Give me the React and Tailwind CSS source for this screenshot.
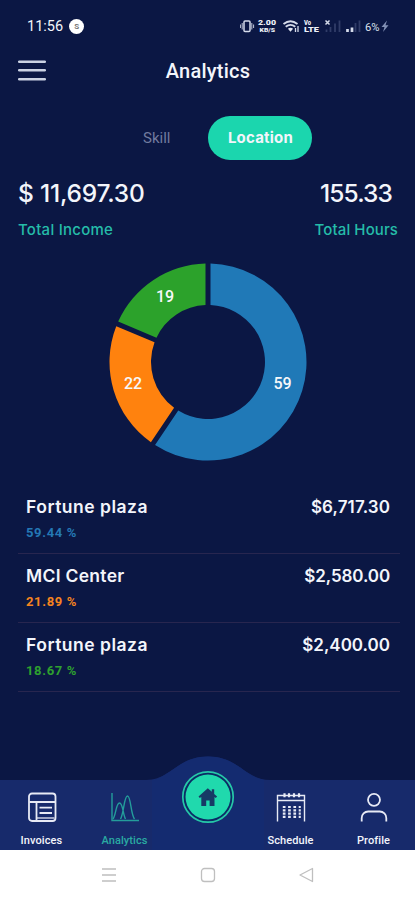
const ROWS = [
  { name: "Fortune plaza", pct: "59.44 %", color: "text-[#2478b5]", amount: "$6,717.30", nameTrack: "tracking-[0.5px]", amtTrack: "tracking-[0.1px]" },
  { name: "MCI Center", pct: "21.89 %", color: "text-[#f5841f]", amount: "$2,580.00", nameTrack: "tracking-[0.3px]", amtTrack: "tracking-[-0.1px]" },
  { name: "Fortune plaza", pct: "18.67 %", color: "text-[#2ea02f]", amount: "$2,400.00", nameTrack: "tracking-[0.5px]", amtTrack: "tracking-[0px]" },
];

const SLICES = [
  { from: 0, to: 213.98, color: "#2079b7", label: "59", x: 192.5, y: 133 },
  { from: 213.98, to: 292.79, color: "#ff820e", label: "22", x: 43, y: 133 },
  { from: 292.79, to: 360, color: "#2ca22b", label: "19", x: 75, y: 46 },
];

const CX = 118;
const CY = 112;

function ringSlice(from, to, outer, inner, gap) {
  const point = (r, deg) => {
    const a = (deg * Math.PI) / 180;
    return `${(CX + r * Math.sin(a)).toFixed(2)} ${(CY - r * Math.cos(a)).toFixed(2)}`;
  };
  const pad = (r) => (Math.asin(gap / 2 / r) * 180) / Math.PI;
  const po = pad(outer);
  const pi = pad(inner);
  const large = to - from > 180 ? 1 : 0;
  return `M${point(outer, from + po)}A${outer} ${outer} 0 ${large} 1 ${point(outer, to - po)}L${point(inner, to - pi)}A${inner} ${inner} 0 ${large} 0 ${point(inner, from + pi)}Z`;
}

function StatusIcons() {
  return (
    <svg width="150" height="16" viewBox="0 0 150 16" fill="none" stroke="#d5dbea" fontFamily="Roboto, sans-serif">
      <rect x="4" y="3" width="6" height="10.5" rx="1" strokeWidth="1.5" />
      <path d="M2.2 5v6.5M11.8 5v6.5M.4 6.5v3.5M13.6 6.5v3.5" strokeWidth="0.9" />
      <g fill="#eef1f8" stroke="none" fontWeight="900">
        <text x="18" y="6.8" fontSize="7" textLength="18" lengthAdjust="spacingAndGlyphs">2.00</text>
        <text x="19.5" y="14.3" fontSize="6" textLength="15.5" lengthAdjust="spacingAndGlyphs">KB/S</text>
        <text x="64" y="6.8" fontSize="6.5" textLength="7" lengthAdjust="spacingAndGlyphs">Vo</text>
        <text x="64" y="14.3" fontSize="6.5" textLength="15" lengthAdjust="spacingAndGlyphs">LTE</text>
      </g>
      <path d="M43.5 6Q50.5 .5 57.5 6M45.7 8.800Q50.5 5 55.3 8.800" strokeWidth="1.8" />
      <path d="M47.9 10.7L50.5 13.7l2.6-3Q50.5 9 47.9 10.7Z" fill="#e3e7f2" stroke="none" />
      <path d="M55.5 10v4M58 8v6" strokeWidth="1.3" />
      <path d="M85.5 2.5l4 4M89.5 2.5l-4 4" strokeWidth="1.5" />
      <path d="M86.5 11.5V14M90.5 9v5M95 5.5v8.5M99.5 2.5V14M115.5 5v9M119.5 2.5V14" stroke="#303c68" strokeWidth="1.8" />
      <path d="M107.5 11v3M112 9.5v4.5" strokeWidth="2.7" />
      <text x="125" y="12.5" fontSize="11" fill="#dce1ee" stroke="none" textLength="14.5" lengthAdjust="spacingAndGlyphs">6%</text>
      <path d="M147 2.5l-5.5 6.5h3l-1.5 5 5.5-6.8h-3Z" fill="#8290b5" stroke="none" />
    </svg>
  );
}

function InvoiceIcon() {
  return (
    <svg width="30" height="30" viewBox="0 0 30 30" fill="none" stroke="#e7eaf5" strokeWidth="1.8">
      <rect x="2" y="1.5" width="26.5" height="27.5" rx="3" />
      <path d="M2.5 10h26M9.500 10.5v18M12.5 15.7h12.5M12.5 21h12.5" />
      <path d="M9.500 26h18" strokeWidth="1.3" />
    </svg>
  );
}

function AnalyticsIcon() {
  return (
    <svg width="30" height="30" viewBox="0 0 30 30" fill="none" stroke="#249d9b" strokeWidth="1.4">
      <path d="M2 1v27.5H29" />
      <path d="M3 27C6 23 6 11 9.500 11s3.500 12 6 16M10.500 27C14 21 14 4 17.500 4s3 18 7 23" />
    </svg>
  );
}

function ScheduleIcon() {
  return (
    <svg width="30" height="30" viewBox="0 0 30 30" fill="none" stroke="#e7eaf5">
      <path d="M1.5 29.5V3.500h27v26M1.5 8.500h27" strokeWidth="1.4" />
      <path d="M8.500 1.200v4M13 1.200v4M18 1.200v4M23 1.200v4" strokeWidth="2.2" />
      <path d="M6.800 15h18M6.800 18.300h18M6.800 21.600h18M6.800 24.900h18" strokeWidth="2.2" strokeDasharray="2.7 2.6" />
    </svg>
  );
}

function ProfileIcon() {
  return (
    <svg width="30" height="30" viewBox="0 0 30 30" fill="none" stroke="#e7eaf5" strokeWidth="1.8">
      <circle cx="15" cy="7.8" r="6" />
      <path d="M2.700 29.500V26a6.500 6.500 0 0 1 6.500-6.500h11.600a6.500 6.500 0 0 1 6.500 6.500v3.500" />
    </svg>
  );
}

function NavItem({ icon, label, active }) {
  return (
    <div className="flex w-[83px] flex-col items-center">
      {icon}
      <span className={`mt-[12px] text-[11px] leading-[14px] font-medium tracking-[0.1px] ${active ? "text-[#2aaaa2]" : "text-[#f3f5fb]"}`}>{label}</span>
    </div>
  );
}

export default function App() {
  return (
    <div className="flex h-[900px] w-[415px] flex-col overflow-hidden bg-[#0b1744] font-['Roboto',sans-serif] text-[#f3f5fb]">
      <header className="flex h-[52px] shrink-0 items-start pt-[18px] pr-[25px] pl-[27px]">
        <span className="text-[14.5px] leading-[17px]">11:56</span>
        <span className="mt-px ml-[6px] flex size-[15px] items-center justify-center rounded-full bg-white text-[8px] font-bold text-[#777]">S</span>
        <span className="ml-auto"><StatusIcons /></span>
      </header>
      <div className="grid h-[38px] shrink-0 grid-cols-3 items-center px-[18px]">
        <svg width="28" height="24" viewBox="0 0 28 24" stroke="#cbd2e3" strokeWidth="2.5" strokeLinecap="round">
          <path d="M1.200 2.700h25.600M1.200 11.300h25.600M1.200 20.300h25.600" />
        </svg>
        <h1 className="pl-px text-center text-[20px] font-medium tracking-[0.25px]">Analytics</h1>
      </div>
      <div className="mt-[26px] flex h-[44px] shrink-0 items-center pl-[143px]">
        <span className="text-[15px] text-[#717b9f]">Skill</span>
        <span className="ml-[38px] flex h-[44px] w-[104px] items-center justify-center rounded-full bg-[#1bd6ae] font-['Inter',sans-serif] text-[15px] font-bold tracking-[0.2px]">Location</span>
      </div>
      <div className="mt-[15px] flex h-[66px] shrink-0 justify-between pr-[17px] pl-[18px] font-['Inter',sans-serif] text-[15px] text-[#25bca9]">
        <div>
          <p className="text-[24.5px] leading-[36px] font-medium tracking-[-0.2px] text-[#f3f5fb]">$ 11,697.30</p>
          <p className="mt-[9px] leading-[20px] font-medium tracking-[0.25px]">Total Income</p>
        </div>
        <div className="text-right">
          <p className="pr-[6px] text-[24.5px] leading-[36px] font-medium tracking-[-0.9px] text-[#f3f5fb]">155.33</p>
          <p className="mt-[9px] leading-[20px] font-medium tracking-[0.1px]">Total Hours</p>
        </div>
      </div>
      <svg className="mt-[9px] ml-[90px] shrink-0" width="236" height="226" viewBox="0 0 236 226">
        {SLICES.map((s) => (
          <g key={s.label}>
            <path d={ringSlice(s.from, s.to, 98.5, 57, 5)} fill={s.color} />
            <text x={s.x} y={s.y + 6} fill="#f7f8fa" textAnchor="middle" fontSize="16" fontWeight="500">{s.label}</text>
          </g>
        ))}
      </svg>
      <div className="mt-[9px] flex shrink-0 flex-col pr-[15px] pl-[18px]">
        {ROWS.map((r, i) => (
          <div key={i} className="flex h-[69px] justify-between border-b border-[#28264f] pt-[10px] pr-[10px] pl-[8px]">
            <div>
              <p className={`font-['Inter',sans-serif] text-[17.5px] leading-[24px] font-semibold ${r.nameTrack}`}>{r.name}</p>
              <p className={`mt-[5px] text-[13px] leading-[18px] font-bold tracking-[0.65px] ${r.color}`}>{r.pct}</p>
            </div>
            <p className={`font-['Inter',sans-serif] text-[17px] leading-[24px] font-semibold ${r.amtTrack}`}>{r.amount}</p>
          </div>
        ))}
      </div>
      <nav className="relative mt-auto h-[95px] shrink-0">
        <svg className="absolute inset-0" width="415" height="95" viewBox="0 0 415 95">
          <path d="M0 25H146C170 25 178 1.5 208 1.5S246 25 270 25H415V95H0Z" fill="#172a6b" />
          <path d="M152 25C171 22 179 1.5 208 1.5S245 22 264 25V95H152Z" fill="#142b70" />
        </svg>
        <div className="relative flex h-full items-start pt-[37px]">
          <NavItem icon={<InvoiceIcon />} label="Invoices" />
          <NavItem icon={<AnalyticsIcon />} label="Analytics" active />
          <div className="-mt-[22px] flex w-[83px] justify-center">
            <svg width="54" height="54" viewBox="0 0 54 54">
              <circle cx="27" cy="27" r="25.2" fill="#0b2b65" stroke="#26c8a8" strokeWidth="1.7" />
              <circle cx="27" cy="27" r="22.5" fill="#20d9ad" />
              <path d="M26.800 18.200l-9.300 8.300 1.300 1.600 1.500-1.200v9h4.900v-5.500h3.400v5.500h4.900v-9l1.300 1.200 1.300-1.600-2.900-2.600v-4.700h-2.400v2.600Z" fill="#173a66" />
            </svg>
          </div>
          <NavItem icon={<ScheduleIcon />} label="Schedule" />
          <NavItem icon={<ProfileIcon />} label="Profile" />
        </div>
      </nav>
      <footer className="flex h-[50px] shrink-0 items-center bg-white pl-[101px]">
        <svg width="214" height="18" viewBox="0 0 214 18" fill="none" stroke="#bfbfbf" strokeWidth="1.3">
          <path d="M1 3h14M1 9h14M1 15h14" />
          <rect x="100.5" y="2.5" width="13" height="13" rx="3" />
          <path d="M211.500 2.500v13L199 9Z" strokeLinejoin="round" />
        </svg>
      </footer>
    </div>
  );
}
